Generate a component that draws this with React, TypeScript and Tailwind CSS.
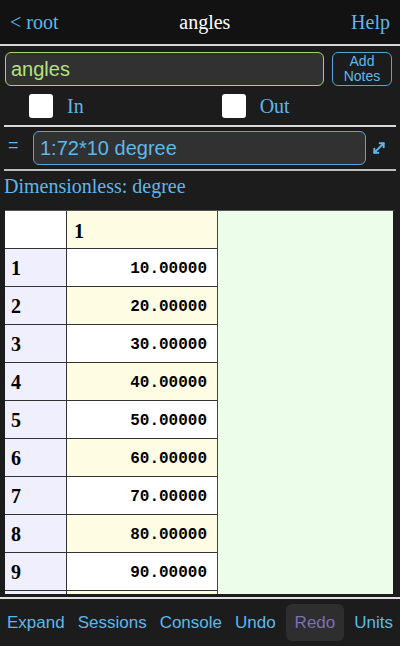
import { MoveDiagonal } from 'lucide-react';

const serif = { fontFamily: '"Liberation Serif", "Times New Roman", serif' };
const sans = { fontFamily: '"Liberation Sans", Arial, sans-serif' };
const mono = { fontFamily: '"Liberation Mono", "Courier New", monospace' };

const rows = [1, 2, 3, 4, 5, 6, 7, 8, 9];

export default function App() {
  return (
    <div className="w-[400px] h-[646px] bg-[#1c1c1c] flex flex-col overflow-hidden" style={serif}>
      <div className="h-[46px] bg-[#121212] flex items-center justify-between px-[10px] text-[20px] border-b-2 border-[#d8d8d8] shrink-0">
        <span className="text-[#5cb8ec]">&lt; root</span>
        <span className="text-white">angles</span>
        <span className="text-[#5cb8ec]">Help</span>
      </div>

      <div className="flex items-center gap-[8px] pl-[5px] pr-[8px] mt-[6px] h-[34px] shrink-0">
        <div className="flex-1 h-[34px] rounded-[6px] border border-[#a3d36d] bg-[#313131] flex items-center px-[5px] text-[20px] text-[#b2e37e]" style={sans}>
          angles
        </div>
        <div className="w-[60px] h-[34px] rounded-[6px] border border-[#4fa6d8] flex flex-col items-center justify-center text-[14px] leading-[15px] text-[#5cb8ec]" style={sans}>
          <span>Add</span>
          <span>Notes</span>
        </div>
      </div>

      <div className="flex items-center h-[28px] mt-[6px] shrink-0 text-[20px] text-[#5cb8ec]">
        <div className="w-[24px] h-[24px] bg-white rounded-[3px] ml-[29px]" />
        <span className="ml-[14px]">In</span>
        <div className="w-[24px] h-[24px] bg-white rounded-[3px] ml-[138px]" />
        <span className="ml-[14px]">Out</span>
      </div>

      <div className="mx-[4px] mt-[5px] h-[2px] bg-[#d8d8d8] shrink-0" />

      <div className="flex items-center h-[34px] mt-[4px] shrink-0" style={sans}>
        <span className="w-[33px] pl-[8px] text-[18px] text-[#5cb8ec] -mt-[6px]">=</span>
        <div className="w-[333px] h-[34px] rounded-[6px] border border-[#4fa6d8] bg-[#313131] flex items-center px-[6px] text-[20px] text-[#5cb8ec]">
          1:72*10 degree
        </div>
        <MoveDiagonal className="ml-[5px] text-[#5cb8ec]" size={16} strokeWidth={3} />
      </div>

      <div className="mx-[4px] mt-[4px] h-[2px] bg-[#bdbdbd] shrink-0" />

      <div className="px-[4px] mt-[4px] text-[20px] leading-[22px] text-[#5cb8ec] shrink-0">Dimensionless: degree</div>

      <div className="mx-[5px] mt-[13px] h-[384px] bg-[#ecfdea] border-t border-[#555] border-r-2 border-r-[#1c1c1c] flex overflow-hidden shrink-0">
        <div className="w-[213px] flex flex-col border-r border-[#444] shrink-0">
          <div className="flex h-[38px] shrink-0 border-b border-[#333]">
            <div className="w-[62px] bg-white border-r border-[#333]" />
            <div className="flex-1 bg-[#fefde4] flex items-end pl-[7px] pb-[2px] text-[20px] font-bold text-black">1</div>
          </div>
          {rows.map((r) => (
            <div key={r} className="flex h-[38px] shrink-0 border-b border-[#333]">
              <div className="w-[62px] bg-[#efeffd] border-r border-[#333] flex items-end pl-[6px] pb-[3px] text-[20px] font-bold text-black">
                {r}
              </div>
              <div
                className={`flex-1 flex items-end justify-end pr-[10px] pb-[5px] text-[16px] font-bold text-black ${
                  r % 2 === 0 ? 'bg-[#fefde4]' : 'bg-white'
                }`}
                style={mono}
              >
                {(r * 10).toFixed(5)}
              </div>
            </div>
          ))}
          <div className="flex h-[38px] shrink-0">
            <div className="w-[62px] bg-[#efeffd] border-r border-[#333]" />
            <div className="flex-1 bg-[#fefde4]" />
          </div>
        </div>
      </div>

      <div className="h-[2px] mt-[3px] bg-[#e0e0e0] shrink-0" />

      <div className="flex-1 flex items-center justify-between px-[4px] text-[17px] text-[#5cb8ec]" style={sans}>
        <span className="px-[3px]">Expand</span>
        <span className="px-[3px]">Sessions</span>
        <span className="px-[3px]">Console</span>
        <span className="px-[3px]">Undo</span>
        <span className="px-[9px] py-[6px] rounded-[6px] bg-[#2e2e2e] text-[#7a70b4]">Redo</span>
        <span className="px-[3px]">Units</span>
      </div>
    </div>
  );
}
